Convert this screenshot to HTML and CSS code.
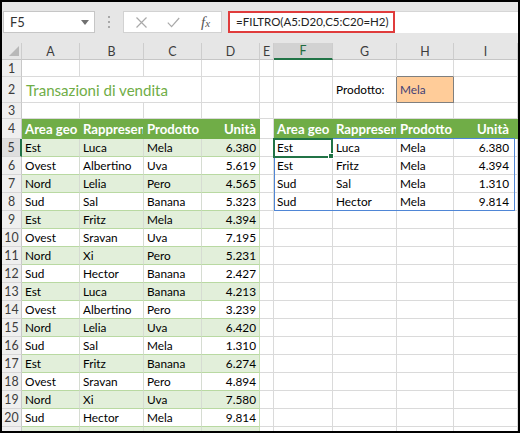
FILE: index.html
```html
<!DOCTYPE html>
<html lang="it">
<head>
<meta charset="utf-8">
<title>FILTRO</title>
<link rel="stylesheet" href="styles.css">
</head>
<body>
<div class="frame">
  <div class="toolbar">
    <div class="namebox"><span>F5</span><span class="caret"></span></div>
    <div class="grip"><i></i><i></i><i></i></div>
    <div class="buttons">
      <svg class="b-x" width="11" height="11" viewBox="0 0 11 11"><path d="M0.5 0.5L10.5 10.5M10.5 0.5L0.5 10.5" stroke="#a9a9a9" stroke-width="1.2" fill="none"/></svg>
      <svg class="b-v" width="13" height="11" viewBox="0 0 13 11"><path d="M0.8 5.6L4.6 9.6L12.2 1" stroke="#a9a9a9" stroke-width="1.2" fill="none"/></svg>
      <span class="fx">f<span class="fx-x">x</span></span>
    </div>
    <div class="formula"><div class="fx-hl">=FILTRO(A5:D20,C5:C20=H2)</div></div>
  </div>

  <div class="sheet">
    <!-- column headers -->
    <div class="corner"><span class="tri"></span></div>
    <div class="c ch">A</div><div class="c ch">B</div><div class="c ch">C</div><div class="c ch">D</div><div class="c ch">E</div><div class="c ch sel">F</div><div class="c ch">G</div><div class="c ch">H</div><div class="c ch">I</div>

    <!-- 1 -->
    <div class="c rh">1</div><div class="c"></div><div class="c"></div><div class="c"></div><div class="c"></div><div class="c"></div><div class="c"></div><div class="c"></div><div class="c inb"></div><div class="c"></div>
    <!-- 2 -->
    <div class="c rh">2</div><div class="c title">Transazioni di vendita</div><div class="c"></div><div class="c"></div><div class="c"></div><div class="c inr">Prodotto:</div><div class="c input">Mela</div><div class="c"></div>
    <!-- 3 -->
    <div class="c rh">3</div><div class="c"></div><div class="c"></div><div class="c"></div><div class="c"></div><div class="c"></div><div class="c"></div><div class="c"></div><div class="c"></div><div class="c"></div>
    <!-- 4 -->
    <div class="c rh">4</div><div class="c th">Area geo</div><div class="c th">Rappresentante</div><div class="c th">Prodotto</div><div class="c th n">Unità</div><div class="c"></div><div class="c th">Area geo</div><div class="c th">Rappresentante</div><div class="c th">Prodotto</div><div class="c th n ni">Unità</div>
    <!-- 5 -->
    <div class="c rh rsel">5</div><div class="c t b">Est</div><div class="c t b">Luca</div><div class="c t b">Mela</div><div class="c t b n te">6.380</div><div class="c"></div><div class="c">Est</div><div class="c">Luca</div><div class="c">Mela</div><div class="c n ni">6.380</div>
    <!-- 6 -->
    <div class="c rh">6</div><div class="c t">Ovest</div><div class="c t">Albertino</div><div class="c t">Uva</div><div class="c t n te">5.619</div><div class="c"></div><div class="c">Est</div><div class="c">Fritz</div><div class="c">Mela</div><div class="c n ni">4.394</div>
    <!-- 7 -->
    <div class="c rh">7</div><div class="c t b">Nord</div><div class="c t b">Lelia</div><div class="c t b">Pero</div><div class="c t b n te">4.565</div><div class="c"></div><div class="c">Sud</div><div class="c">Sal</div><div class="c">Mela</div><div class="c n ni">1.310</div>
    <!-- 8 -->
    <div class="c rh">8</div><div class="c t">Sud</div><div class="c t">Sal</div><div class="c t">Banana</div><div class="c t n te">5.323</div><div class="c"></div><div class="c">Sud</div><div class="c">Hector</div><div class="c">Mela</div><div class="c n ni">9.814</div>
    <!-- 9 -->
    <div class="c rh">9</div><div class="c t b">Est</div><div class="c t b">Fritz</div><div class="c t b">Mela</div><div class="c t b n te">4.394</div><div class="c"></div><div class="c"></div><div class="c"></div><div class="c"></div><div class="c"></div>
    <!-- 10 -->
    <div class="c rh">10</div><div class="c t">Ovest</div><div class="c t">Sravan</div><div class="c t">Uva</div><div class="c t n te">7.195</div><div class="c"></div><div class="c"></div><div class="c"></div><div class="c"></div><div class="c"></div>
    <!-- 11 -->
    <div class="c rh">11</div><div class="c t b">Nord</div><div class="c t b">Xi</div><div class="c t b">Pero</div><div class="c t b n te">5.231</div><div class="c"></div><div class="c"></div><div class="c"></div><div class="c"></div><div class="c"></div>
    <!-- 12 -->
    <div class="c rh">12</div><div class="c t">Sud</div><div class="c t">Hector</div><div class="c t">Banana</div><div class="c t n te">2.427</div><div class="c"></div><div class="c"></div><div class="c"></div><div class="c"></div><div class="c"></div>
    <!-- 13 -->
    <div class="c rh">13</div><div class="c t b">Est</div><div class="c t b">Luca</div><div class="c t b">Banana</div><div class="c t b n te">4.213</div><div class="c"></div><div class="c"></div><div class="c"></div><div class="c"></div><div class="c"></div>
    <!-- 14 -->
    <div class="c rh">14</div><div class="c t">Ovest</div><div class="c t">Albertino</div><div class="c t">Pero</div><div class="c t n te">3.239</div><div class="c"></div><div class="c"></div><div class="c"></div><div class="c"></div><div class="c"></div>
    <!-- 15 -->
    <div class="c rh">15</div><div class="c t b">Nord</div><div class="c t b">Lelia</div><div class="c t b">Uva</div><div class="c t b n te">6.420</div><div class="c"></div><div class="c"></div><div class="c"></div><div class="c"></div><div class="c"></div>
    <!-- 16 -->
    <div class="c rh">16</div><div class="c t">Sud</div><div class="c t">Sal</div><div class="c t">Mela</div><div class="c t n te">1.310</div><div class="c"></div><div class="c"></div><div class="c"></div><div class="c"></div><div class="c"></div>
    <!-- 17 -->
    <div class="c rh">17</div><div class="c t b">Est</div><div class="c t b">Fritz</div><div class="c t b">Banana</div><div class="c t b n te">6.274</div><div class="c"></div><div class="c"></div><div class="c"></div><div class="c"></div><div class="c"></div>
    <!-- 18 -->
    <div class="c rh">18</div><div class="c t">Ovest</div><div class="c t">Sravan</div><div class="c t">Pero</div><div class="c t n te">4.894</div><div class="c"></div><div class="c"></div><div class="c"></div><div class="c"></div><div class="c"></div>
    <!-- 19 -->
    <div class="c rh">19</div><div class="c t b">Nord</div><div class="c t b">Xi</div><div class="c t b">Uva</div><div class="c t b n te">7.580</div><div class="c"></div><div class="c"></div><div class="c"></div><div class="c"></div><div class="c"></div>
    <!-- 20 -->
    <div class="c rh">20</div><div class="c t">Sud</div><div class="c t">Hector</div><div class="c t">Mela</div><div class="c t n te">9.814</div><div class="c"></div><div class="c"></div><div class="c"></div><div class="c"></div><div class="c"></div>
    <!-- 21 (partly visible) -->
    <div class="c rh"></div><div class="c t b"></div><div class="c t b"></div><div class="c t b"></div><div class="c t b te"></div><div class="c"></div><div class="c"></div><div class="c"></div><div class="c"></div><div class="c"></div>

    <!-- overlays: spill range outline and active cell -->
    <div class="spill"></div>
    <div class="active"><span class="handle"></span></div>
  </div>
</div>
</body>
</html>
```

FILE: styles.css
```css
* { box-sizing: border-box; }
html, body { margin: 0; padding: 0; background: #fff; }

.frame {
  width: 520px;
  height: 433px;
  border: 2px solid #000;
  overflow: hidden;
  background: #fff;
  font-family: Lato, "Liberation Sans", sans-serif;
}

/* ---------- formula toolbar ---------- */
.toolbar {
  height: 41px;
  background: #e6e6e6;
  display: flex;
  align-items: flex-start;
  padding: 9px 0 0 1px;
}
.namebox {
  width: 92px;
  height: 22px;
  background: #fff;
  border: 1px solid #c6c6c6;
  display: flex;
  align-items: center;
  justify-content: space-between;
  padding: 0 5px 0 6px;
  font-family: Lato, "Liberation Sans", sans-serif;
  font-size: 13px;
  color: #333;
}
.caret {
  width: 0;
  height: 0;
  border-left: 4px solid transparent;
  border-right: 4px solid transparent;
  border-top: 5px solid #707070;
}
.grip {
  width: 28px;
  height: 22px;
  display: flex;
  flex-direction: column;
  align-items: center;
  justify-content: center;
  gap: 3px;
}
.grip i { display: block; width: 2px; height: 2px; background: #a8a8a8; }
.buttons {
  width: 99px;
  height: 22px;
  background: #fff;
  border: 1px solid #d2d2d2;
  display: flex;
  align-items: center;
}
.b-x { margin-left: 12px; }
.b-v { margin-left: 20px; }
.fx {
  margin-left: 21px;
  font-family: "Liberation Serif", serif;
  font-style: italic;
  font-size: 15px;
  color: #555;
  line-height: 1;
}
.fx-x { font-size: 11px; }
.formula {
  flex: 1;
  height: 22px;
  margin-left: 6px;
  background: #fff;
  border-top: 1px solid #d6d6d6;
}
.fx-hl {
  width: 167px;
  height: 22px;
  margin-top: -1px;
  border: 2px solid #e03c3c;
  padding-left: 6px;
  font-family: Lato, "Liberation Sans", sans-serif;
  font-size: 11.5px;
  line-height: 18px;
  color: #222;
  white-space: nowrap;
  overflow: hidden;
}

/* ---------- sheet grid ---------- */
.sheet {
  position: relative;
  display: grid;
  grid-template-columns: 20px 58px 64px 58px 58px 14px 59px 64px 57px 64px;
  grid-template-rows: 17px 17px 26px 16px 20px repeat(17, 18px);
  font-size: 11.8px;
  color: #000;
}
.c {
  display: flex;
  align-items: center;
  min-width: 0;
  padding: 0 3px;
  white-space: nowrap;
  overflow: hidden;
  border-right: 1px solid #dadada;
  border-bottom: 1px solid #dadada;
}
.n { justify-content: flex-end; }
.ni { padding-right: 8px; }

.corner {
  position: relative;
  background: #e6e6e6;
  border-right: 1px solid #cdcdcd;
  border-bottom: 1px solid #c6c6c6;
}
.tri {
  position: absolute;
  right: 2px;
  bottom: 3px;
  width: 0;
  height: 0;
  border-left: 10px solid transparent;
  border-bottom: 10px solid #b8b8b8;
}
.ch {
  justify-content: center;
  background: #e6e6e6;
  border-right-color: #cdcdcd;
  border-bottom-color: #c6c6c6;
  color: #3c3c3c;
  font-size: 12.4px;
}
.ch.sel {
  background: #d2d2d2;
  border-bottom: 2px solid #217346;
  color: #1f6b40;
}
.rh {
  justify-content: center;
  padding: 0;
  background: #efefef;
  border-right-color: #c8c8c8;
  border-bottom-color: #d6d6d6;
  color: #3c3c3c;
  font-size: 12.4px;
}
.rh.rsel {
  background: #dedede;
  border-right: 2px solid #217346;
}

.title {
  grid-column: span 3;
  color: #70ad47;
  font-size: 15.1px;
  padding-left: 4px;
  overflow: visible;
}
.inb { border-bottom-color: #7f7f7f; }
.inr { border-right-color: #7f7f7f; }
.input {
  background: #ffcc99;
  color: #3f3f76;
  border-right-color: #7f7f7f;
  border-bottom-color: #7f7f7f;
}

/* table styling */
.th {
  background: #70ad47;
  color: #fff;
  font-weight: 700;
  font-size: 13.2px;
  border-right-color: #70ad47;
  border-bottom-color: #70ad47;
}
.t { border-bottom-color: #b9d9a2; border-right-color: #d6dcd2; }
.b { background: #e2efda; }
.te { border-right-color: #c6e0b4; }

/* overlays drawn over the cells */
.spill {
  position: absolute;
  grid-column: 7 / 11;
  grid-row: 6 / 10;
  top: -1px;
  left: 0;
  right: 3px;
  bottom: 0;
  border: 1px solid #4f86d6;
  pointer-events: none;
}
.active {
  position: absolute;
  grid-column: 7 / 8;
  grid-row: 6 / 7;
  top: -1px;
  left: -1px;
  right: 0;
  bottom: -1px;
  border: 2px solid #217346;
  pointer-events: none;
}
.handle {
  position: absolute;
  right: -3px;
  bottom: -3px;
  width: 6px;
  height: 6px;
  background: #217346;
  border: 1px solid #fff;
}
```
